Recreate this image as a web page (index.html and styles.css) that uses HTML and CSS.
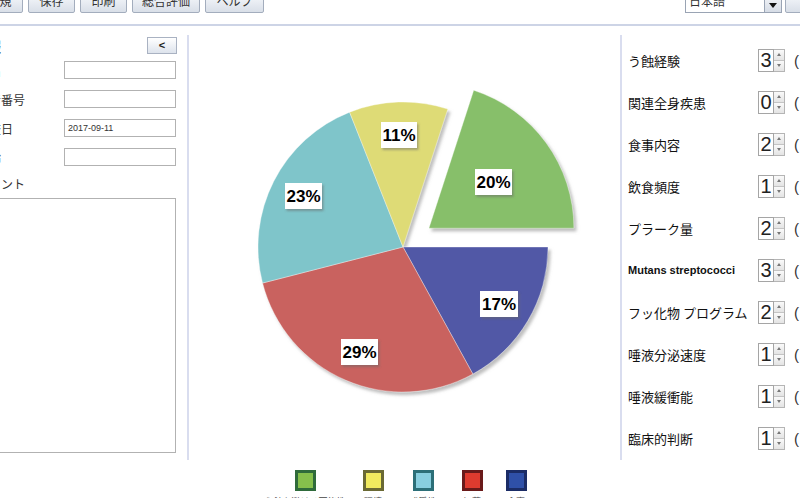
FILE: index.html
```html
<!DOCTYPE html>
<html lang="ja">
<head>
<meta charset="utf-8">
<title>評価</title>
<link rel="stylesheet" href="styles.css">
</head>
<body>
<div class="app">
  <div class="toolbar">
    <button class="tb tb-first">新規</button>
    <button class="tb">保存</button>
    <button class="tb">印刷</button>
    <button class="tb tb-wide">総合評価</button>
    <button class="tb tb-help">ヘルプ</button>
    <div class="lang">
      <span class="lang-text">日本語</span>
      <span class="lang-btn"><span class="tri-down"></span></span>
    </div>
    <button class="tb tb-tail"></button>
  </div>

  <div class="main">
    <div class="left">
      <div class="left-head">
        <span class="left-title">患者情報</span>
        <button class="collapse">&lt;</button>
      </div>
      <div class="field"><span class="flabel">氏名</span><span class="finput"></span></div>
      <div class="field"><span class="flabel">患者番号</span><span class="finput"></span></div>
      <div class="field"><span class="flabel">検査日</span><span class="finput">2017-09-11</span></div>
      <div class="field"><span class="flabel">年齢</span><span class="finput"></span></div>
      <div class="comment-label">コメント</div>
      <div class="comment-box"></div>
    </div>

    <div class="chart">
      <svg class="pie" width="431" height="425" viewBox="-1 0 431 425" xmlns="http://www.w3.org/2000/svg">
        <defs>
          <filter id="sh" x="-10%" y="-10%" width="125%" height="125%">
            <feDropShadow dx="2.5" dy="3" stdDeviation="1.4" flood-color="#8a8a8a" flood-opacity="0.55"/>
          </filter>
          <filter id="lsh" x="-10%" y="-10%" width="130%" height="140%">
            <feDropShadow dx="1.5" dy="2" stdDeviation="0.8" flood-color="#666" flood-opacity="0.5"/>
          </filter>
        </defs>
        <g filter="url(#sh)" stroke="rgba(255,255,255,0.35)" stroke-width="1">
          <path d="M213,212 L358,212 A145,145 0 0 1 282.86,339.06 Z" fill="#5159a6"/>
          <path d="M213,212 L282.86,339.06 A145,145 0 0 1 72.55,248.06 Z" fill="#c9625f"/>
          <path d="M213,212 L72.55,248.06 A145,145 0 0 1 159.63,77.18 Z" fill="#7fc5ca"/>
          <path d="M213,212 L159.63,77.18 A145,145 0 0 1 257.81,74.09 Z" fill="#dedb76"/>
          <path d="M238.9,193.2 L283.71,55.29 A145,145 0 0 1 383.9,193.2 Z" fill="#87bf6a"/>
        </g>
        <g class="labels" font-family="Liberation Sans, Arial, sans-serif" font-weight="bold" font-size="17" text-anchor="middle">
          <g filter="url(#lsh)">
            <rect x="191" y="87" width="36" height="26" fill="#fff"/>
            <rect x="285" y="134" width="37" height="26" fill="#fff"/>
            <rect x="95" y="148" width="37" height="26" fill="#fff"/>
            <rect x="151" y="304" width="37" height="26" fill="#fff"/>
            <rect x="290" y="256" width="38" height="26" fill="#fff"/>
          </g>
          <text x="209" y="106">11%</text>
          <text x="303.5" y="153">20%</text>
          <text x="113.5" y="167">23%</text>
          <text x="169.5" y="323">29%</text>
          <text x="309" y="275">17%</text>
        </g>
      </svg>
    </div>

    <div class="right">
      <div class="row"><span class="rlabel">う蝕経験</span><span class="spin"><span class="digit">3</span><span class="arrows"><span class="up"><i class="tri-up"></i></span><span class="down"><i class="tri-dn"></i></span></span></span><span class="paren">(</span></div>
      <div class="row"><span class="rlabel">関連全身疾患</span><span class="spin"><span class="digit">0</span><span class="arrows"><span class="up"><i class="tri-up"></i></span><span class="down"><i class="tri-dn"></i></span></span></span><span class="paren">(</span></div>
      <div class="row"><span class="rlabel">食事内容</span><span class="spin"><span class="digit">2</span><span class="arrows"><span class="up"><i class="tri-up"></i></span><span class="down"><i class="tri-dn"></i></span></span></span><span class="paren">(</span></div>
      <div class="row"><span class="rlabel">飲食頻度</span><span class="spin"><span class="digit">1</span><span class="arrows"><span class="up"><i class="tri-up"></i></span><span class="down"><i class="tri-dn"></i></span></span></span><span class="paren">(</span></div>
      <div class="row"><span class="rlabel">プラーク量</span><span class="spin"><span class="digit">2</span><span class="arrows"><span class="up"><i class="tri-up"></i></span><span class="down"><i class="tri-dn"></i></span></span></span><span class="paren">(</span></div>
      <div class="row"><span class="rlabel rlabel-latin">Mutans streptococci</span><span class="spin"><span class="digit">3</span><span class="arrows"><span class="up"><i class="tri-up"></i></span><span class="down"><i class="tri-dn"></i></span></span></span><span class="paren">(</span></div>
      <div class="row"><span class="rlabel">フッ化物 プログラム</span><span class="spin"><span class="digit">2</span><span class="arrows"><span class="up"><i class="tri-up"></i></span><span class="down"><i class="tri-dn"></i></span></span></span><span class="paren">(</span></div>
      <div class="row"><span class="rlabel">唾液分泌速度</span><span class="spin"><span class="digit">1</span><span class="arrows"><span class="up"><i class="tri-up"></i></span><span class="down"><i class="tri-dn"></i></span></span></span><span class="paren">(</span></div>
      <div class="row"><span class="rlabel">唾液緩衝能</span><span class="spin"><span class="digit">1</span><span class="arrows"><span class="up"><i class="tri-up"></i></span><span class="down"><i class="tri-dn"></i></span></span></span><span class="paren">(</span></div>
      <div class="row"><span class="rlabel">臨床的判断</span><span class="spin"><span class="digit">1</span><span class="arrows"><span class="up"><i class="tri-up"></i></span><span class="down"><i class="tri-dn"></i></span></span></span><span class="paren">(</span></div>
    </div>
  </div>

  <div class="legend">
    <div class="litem li-1"><span class="sw sw-green"></span><span class="ltext">う蝕を避ける可能性</span></div>
    <div class="litem li-2"><span class="sw sw-yellow"></span><span class="ltext">環境</span></div>
    <div class="litem li-3"><span class="sw sw-cyan"></span><span class="ltext">感受性</span></div>
    <div class="litem li-4"><span class="sw sw-red"></span><span class="ltext">細菌</span></div>
    <div class="litem li-5"><span class="sw sw-blue"></span><span class="ltext">食事</span></div>
  </div>
</div>
</body>
</html>
```
FILE: styles.css
```css
* { box-sizing: border-box; }
html, body { margin: 0; padding: 0; }
body {
  width: 800px;
  height: 498px;
  overflow: hidden;
  background: #fff;
  font-family: "Noto Sans CJK JP", "Liberation Sans", sans-serif;
  color: #222;
}
.app { width: 800px; height: 498px; overflow: hidden; }

/* toolbar */
.toolbar {
  height: 26px;
  display: flex;
  align-items: flex-start;
  gap: 5px;
  border-bottom: 2px solid #cdd4e6;
}
.tb {
  margin-top: -11px;
  height: 24px;
  width: 47px;
  padding: 0;
  border: 1px solid #a3adbd;
  border-radius: 2px;
  background: linear-gradient(#ffffff, #e9edf3 55%, #d9dfe8);
  font-family: "Noto Sans CJK JP", sans-serif;
  font-size: 12px;
  line-height: 22px;
  color: #333;
}
.tb-first { margin-left: -24px; }
.tb-wide { width: 68px; }
.tb-help { width: 59px; }
.tb-tail { width: 30px; margin-right: -15px; margin-left: -2px; }
.lang {
  margin-left: auto;
  margin-top: -11px;
  height: 24px;
  width: 97px;
  display: flex;
  border: 1px solid #9aa4b4;
  background: #fff;
}
.lang-text {
  flex: 1;
  font-size: 12px;
  line-height: 22px;
  padding-left: 3px;
  color: #333;
}
.lang-btn {
  width: 17px;
  border-left: 1px solid #9aa4b4;
  background: linear-gradient(#fdfdfe, #d6dce6);
  display: flex;
  justify-content: center;
  align-items: center;
  padding-top: 9px;
}
.tri-down {
  width: 0; height: 0;
  border-left: 4px solid transparent;
  border-right: 4px solid transparent;
  border-top: 5px solid #111;
}

/* main */
.main {
  display: flex;
  padding-top: 9px;
  height: 434px;
}
.left {
  margin-left: -23px;
  width: 212px;
  flex: 0 0 212px;
  border-right: 2px solid #d9ddef;
  padding: 2px 11px 0 0;
}
.left-head {
  display: flex;
  align-items: center;
  justify-content: space-between;
  height: 17px;
  margin-right: -1px;
}
.left-title {
  margin-left: -32px;
  font-size: 14px;
  font-weight: bold;
}
.collapse {
  width: 30px;
  height: 17px;
  padding: 0;
  border: 1px solid #a9b2c2;
  background: linear-gradient(#ffffff, #dde3ec);
  font-family: "Liberation Sans", sans-serif;
  font-size: 11px;
  font-weight: bold;
  line-height: 15px;
  color: #222;
}
.field {
  display: flex;
  align-items: center;
  justify-content: space-between;
  height: 18px;
  margin-top: 11px;
}
.left-head + .field { margin-top: 7px; }
.flabel { font-size: 12px; color: #333; }
.finput {
  width: 112px;
  height: 18px;
  border: 1px solid #b2b2b2;
  font-family: "Liberation Sans", sans-serif;
  font-size: 9px;
  line-height: 16px;
  padding-left: 3px;
  color: #333;
}
.comment-label {
  font-size: 12px;
  color: #333;
  margin-top: 9px;
  height: 18px;
  line-height: 18px;
}
.comment-box {
  margin-top: 5px;
  height: 255px;
  border: 1px solid #b2b2b2;
}

.chart {
  flex: 0 0 431px;
  width: 431px;
  height: 425px;
}
.pie { display: block; }

.right {
  flex: 1;
  height: 425px;
  border-left: 2px solid #d9ddef;
  padding: 4px 0 0 6px;
}
.row {
  display: flex;
  align-items: center;
  height: 42px;
}
.rlabel {
  width: 130px;
  font-size: 13px;
  color: #111;
  white-space: nowrap;
}
.rlabel-latin {
  font-family: "Liberation Sans", Arial, sans-serif;
  font-weight: bold;
  font-size: 11px;
}
.spin { display: flex; height: 23px; }
.digit {
  width: 16px;
  height: 23px;
  border: 1px solid #a5a5a5;
  background: #fff;
  font-family: "Liberation Sans", sans-serif;
  font-size: 20px;
  line-height: 21px;
  text-align: center;
  color: #222;
}
.arrows {
  width: 11px;
  height: 23px;
  display: flex;
  flex-direction: column;
  border: 1px solid #b5b5b5;
  border-left: none;
}
.up, .down {
  flex: 1;
  display: flex;
  align-items: center;
  justify-content: center;
  background: linear-gradient(#fafafa, #e4e4e4);
}
.down { border-top: 1px solid #c4c4c4; }
.tri-up, .tri-dn {
  display: block;
  width: 0; height: 0;
  border-left: 2.5px solid transparent;
  border-right: 2.5px solid transparent;
}
.tri-up { border-bottom: 3px solid #777; }
.tri-dn { border-top: 3px solid #777; }
.paren {
  margin-left: 9px;
  font-family: "Liberation Sans", sans-serif;
  font-size: 15px;
  color: #333;
}

/* legend */
.legend {
  display: flex;
  padding-top: 10px;
  padding-left: 265px;
}
.litem {
  display: flex;
  flex-direction: column;
  align-items: center;
}
.li-1 { width: 80px; }
.li-2 { width: 56px; }
.li-3 { width: 44px; }
.li-4 { width: 54px; }
.li-5 { width: 34px; }
.sw {
  width: 21px;
  height: 21px;
  border: 3px solid;
}
.sw-green { background: #86c04c; border-color: #2f6b3b; }
.sw-yellow { background: #f1ea5f; border-color: #6a6934; }
.sw-cyan { background: #88cfe0; border-color: #2c6f78; }
.sw-red { background: #df3b2f; border-color: #6a1a1a; }
.sw-blue { background: #2f50a8; border-color: #1b2c66; }
.ltext {
  margin-top: 5px;
  font-size: 9px;
  line-height: 12px;
  white-space: nowrap;
  color: #444;
}
```
